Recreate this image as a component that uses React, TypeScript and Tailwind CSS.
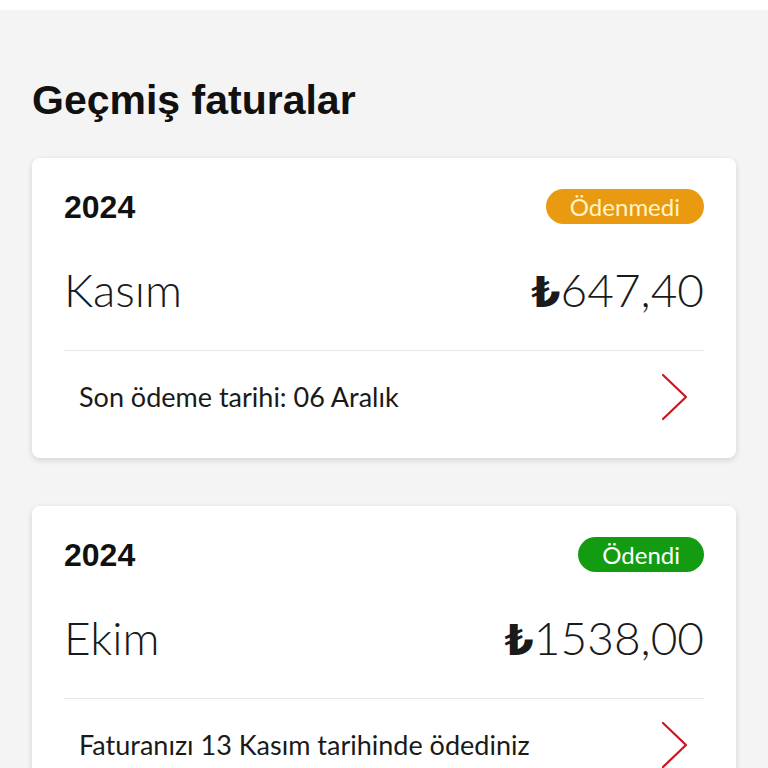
import React from 'react';

type Bill = {
  year: string;
  month: string;
  amount: string;
  status: 'paid' | 'unpaid';
  note: string;
};

const bills: Bill[] = [
  { year: '2024', month: 'Kasım', amount: '647,40', status: 'unpaid', note: 'Son ödeme tarihi: 06 Aralık' },
  { year: '2024', month: 'Ekim', amount: '1538,00', status: 'paid', note: 'Faturanızı 13 Kasım tarihinde ödediniz' },
];

function Chevron() {
  return (
    <svg width="30" height="48" viewBox="0 0 30 48" fill="none">
      <polyline points="3,2 26,24 3,46" stroke="#d0141e" strokeWidth="2.2" strokeLinecap="round" strokeLinejoin="round" />
    </svg>
  );
}

function BillCard({ bill }: { bill: Bill }) {
  const paid = bill.status === 'paid';
  return (
    <div className="rounded-lg bg-white px-8 pt-[31px] pb-[37px] shadow-[0_2px_6px_rgba(0,0,0,0.14)]">
      {/* Yıl + durum */}
      <div className="flex h-[35px] items-center justify-between">
        <span className="font-['Liberation_Sans',sans-serif] text-[32px] font-bold leading-none text-[#111]">
          {bill.year}
        </span>
        {paid ? (
          <span className="flex h-[35px] items-center rounded-full bg-[#139c12] px-[24px] font-['Lato',sans-serif] text-[24px] text-white">
            Ödendi
          </span>
        ) : (
          <span className="flex h-[35px] items-center rounded-full bg-[#ea9a10] px-[24px] font-['Lato',sans-serif] text-[24px] text-[#fff4c8]">
            Ödenmedi
          </span>
        )}
      </div>

      {/* Ay + tutar */}
      <div className="mt-[40px] mb-[34px] flex h-[52px] items-center justify-between font-['Lato',sans-serif] text-[46px] font-light leading-none text-[#1a1a1a]">
        <span>{bill.month}</span>
        <span className="flex items-baseline">
          <span className="font-['DejaVu_Sans',sans-serif] text-[42px] font-bold">₺</span>
          <span>{bill.amount}</span>
        </span>
      </div>

      <div className="h-px bg-[#e6e6e6]" />

      {/* Alt satır */}
      <div className="mt-[22px] flex h-[48px] items-center justify-between pl-[15px] pr-[14px]">
        <span className="font-['Lato',sans-serif] text-[27px] text-[#1a1a1a]">{bill.note}</span>
        <Chevron />
      </div>
    </div>
  );
}

export default function App() {
  return (
    <div className="h-[768px] w-[768px] overflow-hidden bg-white">
      <div className="mt-[10px] h-full bg-[#f4f4f4] px-8 pt-[64px]">
        <h1 className="mb-[32px] font-['Liberation_Sans',sans-serif] text-[41px] font-bold leading-[52px] text-[#111]">
          Geçmiş faturalar
        </h1>
        <div className="flex flex-col gap-[48px]">
          {bills.map((b) => (
            <BillCard key={b.month} bill={b} />
          ))}
        </div>
      </div>
    </div>
  );
}
